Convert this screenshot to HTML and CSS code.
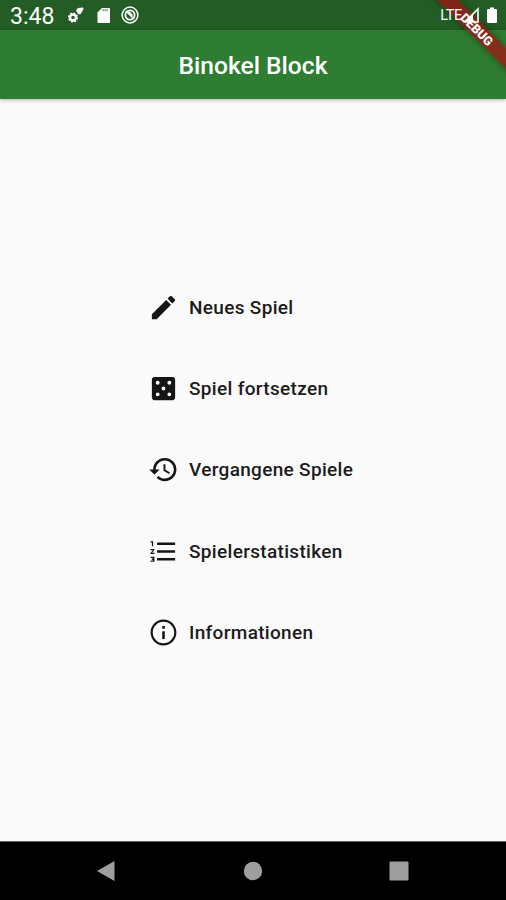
FILE: index.html
```
<!DOCTYPE html>
<html lang="de">
<head>
<meta charset="utf-8">
<title>Binokel Block</title>
<link rel="stylesheet" href="styles.css">
</head>
<body>
<div class="screen">
  <div class="statusbar">
    <span class="clock">3:48</span>
    <svg class="gears" width="18" height="18" viewBox="0 0 18 18"><circle cx="6" cy="11.500" r="3" fill="none" stroke="#fff" stroke-width="2.400"/><circle cx="6" cy="11.500" r="4.500" fill="none" stroke="#fff" stroke-width="1.200" stroke-dasharray="2 1.500"/><path d="M9 4.200l2-2.200 5-.5.600 1.800-3.400 5.200-2.600-1z" fill="#fff"/></svg>
    <svg class="sdcard" width="14" height="17" viewBox="0 0 14 17"><path d="M5 1h7q1 0 1 1v13q0 1-1 1H1.500q-1 0-1-1V5.500z" fill="#fff"/><path d="M5.500 3.300h6" stroke="#6e926f" stroke-width="2" stroke-dasharray="1.400 .6"/></svg>
    <svg class="ring" width="18" height="18" viewBox="0 0 18 18"><g fill="none" stroke="#fff"><circle cx="9" cy="9" r="7.900" stroke-width="1.500"/><circle cx="9" cy="9" r="4.600" stroke-width="1.800"/><path d="M5 5l8 8M7.500 5.500l4 4" stroke-width="1.500"/></g></svg>
    <span class="network">LTE</span>
    <svg class="signal" width="18" height="17" viewBox="0 0 18 17"><path d="M16 2v13H3z" fill="none" stroke="#fff" stroke-width="1.600"/><path d="M11 7v8H3z" fill="#fff"/></svg>
    <svg class="battery" width="10" height="17" viewBox="0 0 10 17"><path d="M3 .5h4V2h2q1 0 1 1v12q0 1-1 1H1q-1 0-1-1V3q0-1 1-1h2z" fill="#fff"/></svg>
  </div>
  <header class="appbar"><h1>Binokel Block</h1></header>
  <main class="content">
    <nav class="menu">
      <a class="item"><svg viewBox="0 0 24 24"><path d="M3 17.250V21h3.750L17.810 9.940l-3.750-3.750L3 17.250zM20.710 7.040a1 1 0 0 0 0-1.410l-2.340-2.340a1 1 0 0 0-1.410 0l-1.830 1.830 3.750 3.750 1.830-1.830z"/></svg><span>Neues Spiel</span></a>
      <a class="item"><svg viewBox="0 0 24 24"><path fill-rule="evenodd" d="M19 3H5c-1.100 0-2 .9-2 2v14c0 1.100.9 2 2 2h14c1.100 0 2-.9 2-2V5c0-1.100-.9-2-2-2zM7.500 18a1.500 1.500 0 1 1 0-3 1.500 1.500 0 0 1 0 3zm0-9a1.500 1.500 0 1 1 0-3 1.500 1.500 0 0 1 0 3zm4.500 4.500a1.500 1.500 0 1 1 0-3 1.500 1.500 0 0 1 0 3zm4.500 4.500a1.500 1.500 0 1 1 0-3 1.500 1.500 0 0 1 0 3zm0-9a1.500 1.500 0 1 1 0-3 1.500 1.500 0 0 1 0 3z"/></svg><span>Spiel fortsetzen</span></a>
      <a class="item"><svg viewBox="0 0 24 24"><path d="M13 3a9 9 0 0 0-9 9H1l3.890 3.890.07.14L9 12H6c0-3.870 3.130-7 7-7s7 3.130 7 7-3.130 7-7 7c-1.930 0-3.680-.79-4.940-2.060l-1.420 1.420A8.954 8.954 0 0 0 13 21a9 9 0 0 0 0-18zm-1 5v5l4.280 2.540.72-1.210-3.500-2.080V8H12z"/></svg><span>Vergangene Spiele</span></a>
      <a class="item"><svg viewBox="0 0 24 24"><path d="M2 17h2v.5H3v1h1v.5H2v1h3v-4H2v1zm1-9h1V4H2v1h1v3zm-1 3h1.800L2 13.100v.9h3v-1H3.200L5 10.900V10H2v1zm5-6v2h14V5H7zm0 14h14v-2H7v2zm0-6h14v-2H7v2z"/></svg><span>Spielerstatistiken</span></a>
      <a class="item"><svg viewBox="0 0 24 24"><path d="M11 17h2v-6h-2v6zm1-15C6.480 2 2 6.480 2 12s4.480 10 10 10 10-4.480 10-10S17.520 2 12 2zm0 18.300c-4.580 0-8.300-3.720-8.300-8.300s3.720-8.300 8.300-8.300 8.300 3.720 8.300 8.300-3.720 8.300-8.300 8.300zM11 9h2V7h-2v2z"/></svg><span>Informationen</span></a>
    </nav>
  </main>
  <footer class="navbar">
    <svg viewBox="0 0 24 24"><path d="M20.500 2v20L3 12z"/></svg>
    <svg viewBox="0 0 24 24"><circle cx="12" cy="12" r="9.200"/></svg>
    <svg viewBox="0 0 24 24"><rect x="2.500" y="2.500" width="19" height="19" rx="1"/></svg>
  </footer>
  <div class="ribbon">DEBUG</div>
</div>
</body>
</html>
```
FILE: styles.css
```
* { box-sizing: border-box; }
body { margin: 0; font-family: Roboto, "Liberation Sans", sans-serif; }
.screen {
  position: relative;
  width: 506px;
  height: 900px;
  overflow: hidden;
  display: flex;
  flex-direction: column;
  background: #fafafa;
}
.statusbar {
  height: 30px;
  flex: none;
  display: flex;
  align-items: center;
  padding: 0 9px 0 10px;
  background: #235d25;
  color: #fff;
}
.statusbar svg, .network { position: relative; z-index: 2; }
.clock { width: 57px; font-size: 23px; line-height: 30px; padding-top: 3px; }
.sdcard { margin-left: 12px; }
.ring { margin-left: 10px; }
.network { margin-left: auto; font-size: 14.5px; letter-spacing: -0.3px; }
.signal { margin-left: 0; }
.battery { margin-left: 7px; }
.appbar {
  height: 69px;
  flex: none;
  display: flex;
  align-items: center;
  justify-content: center;
  background: #2e7d32;
  box-shadow: 0 1px 4px rgba(0, 0, 0, .3);
}
.appbar h1 { margin: 2px 0 0; font-size: 24.6px; font-weight: 500; color: #fff; }
.content { flex: 1; padding: 167.4px 0 0 148px; }
.menu { display: flex; flex-direction: column; }
.item {
  height: 81.4px;
  display: flex;
  align-items: center;
  gap: 10px;
  font-size: 19px;
  font-weight: 500;
  letter-spacing: .32px;
  color: #1c1c1c;
}
.item svg { width: 31px; height: 31px; fill: #151515; }
.navbar {
  height: 59px;
  flex: none;
  display: flex;
  align-items: center;
  justify-content: space-between;
  padding: 0 95px 0 94px;
  background: #000;
  border-top: 1px solid #666;
}
.navbar svg { width: 24px; height: 24px; fill: #9e9e9e; }
.ribbon {
  position: absolute;
  left: 418px;
  top: 22.5px;
  width: 120px;
  height: 15px;
  padding-right: 3px;
  transform: rotate(45deg);
  background: rgba(158, 20, 20, .76);
  box-shadow: 0 0 7px rgba(0, 0, 0, .4);
  color: #fff;
  font-size: 12.5px;
  font-weight: 900;
  line-height: 15px;
  text-align: center;
}
```
